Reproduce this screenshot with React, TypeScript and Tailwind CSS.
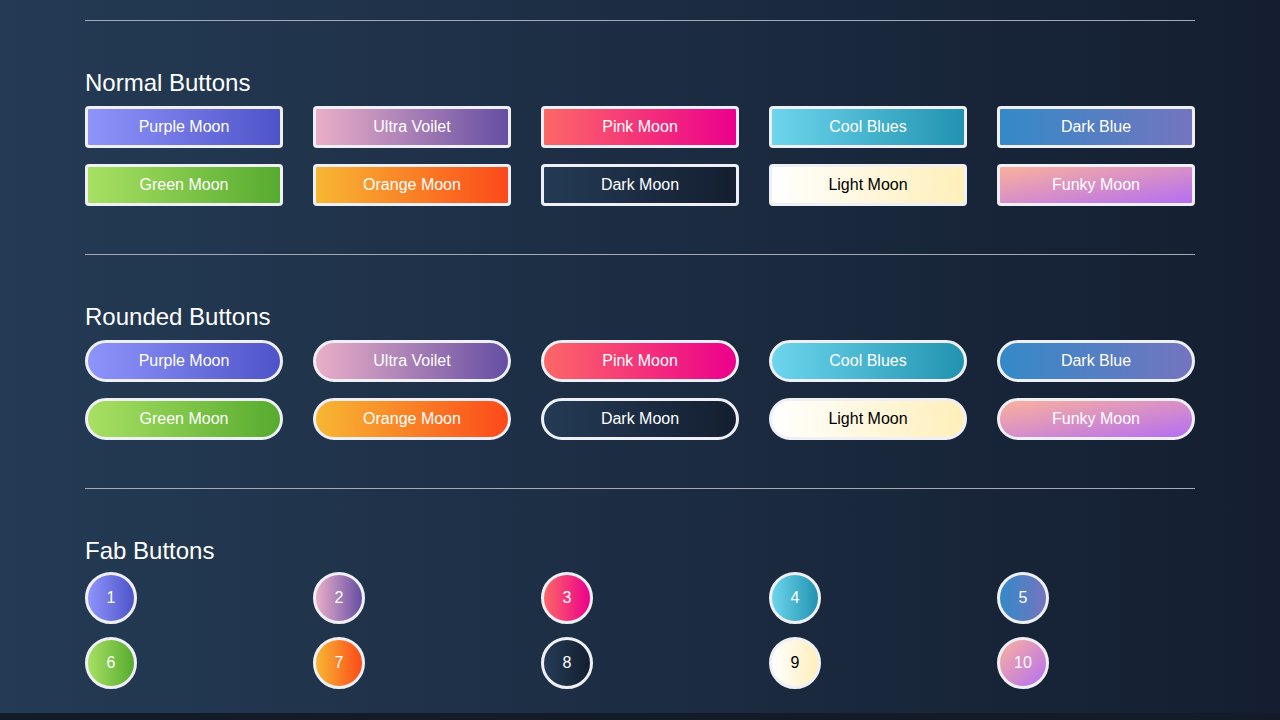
import React from "react";

type G = { name: string; bg: string; text: string };

const grads: G[] = [
  { name: "Purple Moon", bg: "bg-[linear-gradient(to_right,#8f94fb,#4e54c8)]", text: "text-white" },
  { name: "Ultra Voilet", bg: "bg-[linear-gradient(to_right,#eaafc8,#654ea3)]", text: "text-white" },
  { name: "Pink Moon", bg: "bg-[linear-gradient(to_right,#fc6767,#ec008c)]", text: "text-white" },
  { name: "Cool Blues", bg: "bg-[linear-gradient(to_right,#6dd5ed,#2193b0)]", text: "text-white" },
  { name: "Dark Blue", bg: "bg-[linear-gradient(to_right,#348ac7,#7474bf)]", text: "text-white" },
  { name: "Green Moon", bg: "bg-[linear-gradient(to_right,#a8e063,#56ab2f)]", text: "text-white" },
  { name: "Orange Moon", bg: "bg-[linear-gradient(to_right,#f7b733,#fc4a1a)]", text: "text-white" },
  { name: "Dark Moon", bg: "bg-[linear-gradient(to_right,#243b55,#141e30)]", text: "text-white" },
  { name: "Light Moon", bg: "bg-[linear-gradient(to_right,#ffffff,#ffefba)]", text: "text-black" },
  { name: "Funky Moon", bg: "bg-[linear-gradient(to_bottom_right,#fbb19c,#b46ef2)]", text: "text-white" },
];

function Heading({ children, mb }: { children: React.ReactNode; mb: string }) {
  return (
    <h2 className={`text-[24px] leading-[28px] text-white font-normal mt-12 ${mb}`}>{children}</h2>
  );
}

export default function App() {
  return (
    <div
      className="min-h-screen bg-[#131b29]"
      style={{ fontFamily: '"Liberation Sans", Arial, sans-serif' }}
    >
      <div className="bg-[linear-gradient(to_right,#243b55,#141e30)] pt-5 pb-6 px-[85px]">
        <hr className="border-0 h-px bg-[#a3aab5]" />
        <Heading mb="mb-[9px]">Normal Buttons</Heading>
        <div className="grid grid-cols-5 gap-x-[30px] gap-y-4">
          {grads.map((g) => (
            <button
              key={g.name}
              className={`h-[42px] rounded-[4px] border-[3px] border-[#eef0f5] ${g.bg} ${g.text} text-[16px] leading-none`}
            >
              {g.name}
            </button>
          ))}
        </div>
        <div className="h-12" />
        <hr className="border-0 h-px bg-[#a3aab5]" />
        <Heading mb="mb-[9px]">Rounded Buttons</Heading>
        <div className="grid grid-cols-5 gap-x-[30px] gap-y-4">
          {grads.map((g) => (
            <button
              key={g.name}
              className={`h-[42px] rounded-full border-[3px] border-[#eef0f5] ${g.bg} ${g.text} text-[16px] leading-none`}
            >
              {g.name}
            </button>
          ))}
        </div>
        <div className="h-12" />
        <hr className="border-0 h-px bg-[#a3aab5]" />
        <Heading mb="mb-[7px]">Fab Buttons</Heading>
        <div className="grid grid-cols-5 gap-x-[30px] gap-y-[13px]">
          {grads.map((g, i) => (
            <div key={g.name}>
              <button
                className={`w-[52px] h-[52px] rounded-full border-[3px] border-[#eef0f5] ${g.bg} ${g.text} text-[16px] leading-none flex items-center justify-center`}
              >
                {i + 1}
              </button>
            </div>
          ))}
        </div>
      </div>
    </div>
  );
}
